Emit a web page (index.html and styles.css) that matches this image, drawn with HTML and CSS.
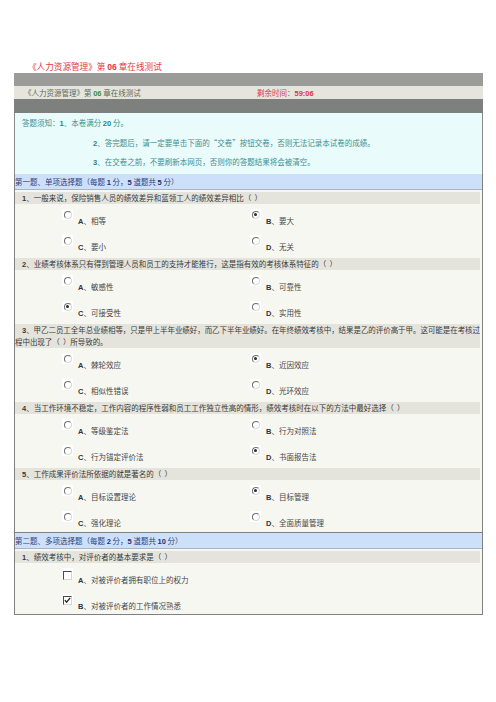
FILE: index.html
```html
<!DOCTYPE html>
<html lang="zh-CN">
<head>
<meta charset="utf-8">
<title>《人力资源管理》第06章在线测试</title>
<link rel="stylesheet" href="styles.css">
</head>
<body>
<div class="page">
  <h1 class="title">《人力资源管理》第 <span class="en">06</span> 章在线测试</h1>
  <div class="bar-top"></div>
  <div class="bar-info">
    <span class="exam">《人力资源管理》第 <span class="en green">06</span> 章在线测试</span>
    <span class="timer">剩余时间：<span class="en">59:06</span></span>
  </div>
  <div class="bar-dark"></div>
  <div class="notice">
    <div class="n1">答题须知：<span class="en">1</span>、本卷满分 <span class="en">20</span> 分。</div>
    <div class="n2"><span class="en">2</span>、答完题后，请一定要单击下面的“交卷”按钮交卷，否则无法记录本试卷的成绩。</div>
    <div class="n2"><span class="en">3</span>、在交卷之前，不要刷新本网页，否则你的答题结果将会被清空。</div>
  </div>

  <section class="sec">
    <div class="sec-head">第一题、单项选择题（每题 <span class="en">1</span> 分，<span class="en">5</span> 道题共 <span class="en">5</span> 分）</div>

    <div class="q">
      <div class="q-text"><span class="en">1</span>、一般来说，保险销售人员的绩效差异和蓝领工人的绩效差异相比（&nbsp;&nbsp;）</div>
      <div class="opts">
        <div class="opt"><span class="box"><span class="radio"></span></span><span class="opt-text"><span class="en">A</span>、相等</span></div>
        <div class="opt"><span class="box"><span class="radio on"></span></span><span class="opt-text"><span class="en">B</span>、要大</span></div>
        <div class="opt"><span class="box"><span class="radio"></span></span><span class="opt-text"><span class="en">C</span>、要小</span></div>
        <div class="opt"><span class="box"><span class="radio"></span></span><span class="opt-text"><span class="en">D</span>、无关</span></div>
      </div>
    </div>

    <div class="q">
      <div class="q-text"><span class="en">2</span>、业绩考核体系只有得到管理人员和员工的支持才能推行，这是指有效的考核体系特征的（&nbsp;&nbsp;）</div>
      <div class="opts">
        <div class="opt"><span class="box"><span class="radio"></span></span><span class="opt-text"><span class="en">A</span>、敏感性</span></div>
        <div class="opt"><span class="box"><span class="radio"></span></span><span class="opt-text"><span class="en">B</span>、可靠性</span></div>
        <div class="opt"><span class="box"><span class="radio on"></span></span><span class="opt-text"><span class="en">C</span>、可接受性</span></div>
        <div class="opt"><span class="box"><span class="radio"></span></span><span class="opt-text"><span class="en">D</span>、实用性</span></div>
      </div>
    </div>

    <div class="q">
      <div class="q-text two"><span class="en">3</span>、甲乙二员工全年总业绩相等，只是甲上半年业绩好，而乙下半年业绩好。在年终绩效考核中，结果是乙的评价高于甲。这可能是在考核过<br>程中出现了（&nbsp;&nbsp;）所导致的。</div>
      <div class="opts">
        <div class="opt"><span class="box"><span class="radio"></span></span><span class="opt-text"><span class="en">A</span>、棘轮效应</span></div>
        <div class="opt"><span class="box"><span class="radio on"></span></span><span class="opt-text"><span class="en">B</span>、近因效应</span></div>
        <div class="opt"><span class="box"><span class="radio"></span></span><span class="opt-text"><span class="en">C</span>、相似性错误</span></div>
        <div class="opt"><span class="box"><span class="radio"></span></span><span class="opt-text"><span class="en">D</span>、光环效应</span></div>
      </div>
    </div>

    <div class="q">
      <div class="q-text"><span class="en">4</span>、当工作环境不稳定，工作内容的程序性弱和员工工作独立性高的情形，绩效考核时在以下的方法中最好选择（&nbsp;&nbsp;）</div>
      <div class="opts">
        <div class="opt"><span class="box"><span class="radio"></span></span><span class="opt-text"><span class="en">A</span>、等级鉴定法</span></div>
        <div class="opt"><span class="box"><span class="radio"></span></span><span class="opt-text"><span class="en">B</span>、行为对照法</span></div>
        <div class="opt"><span class="box"><span class="radio"></span></span><span class="opt-text"><span class="en">C</span>、行为锚定评价法</span></div>
        <div class="opt"><span class="box"><span class="radio on"></span></span><span class="opt-text"><span class="en">D</span>、书面报告法</span></div>
      </div>
    </div>

    <div class="q">
      <div class="q-text"><span class="en">5</span>、工作成果评价法所依据的就是著名的（&nbsp;&nbsp;）</div>
      <div class="opts">
        <div class="opt"><span class="box"><span class="radio"></span></span><span class="opt-text"><span class="en">A</span>、目标设置理论</span></div>
        <div class="opt"><span class="box"><span class="radio on"></span></span><span class="opt-text"><span class="en">B</span>、目标管理</span></div>
        <div class="opt"><span class="box"><span class="radio"></span></span><span class="opt-text"><span class="en">C</span>、强化理论</span></div>
        <div class="opt"><span class="box"><span class="radio"></span></span><span class="opt-text"><span class="en">D</span>、全面质量管理</span></div>
      </div>
    </div>
  </section>

  <section class="sec">
    <div class="sec-head">第二题、多项选择题（每题 <span class="en">2</span> 分，<span class="en">5</span> 道题共 <span class="en">10</span> 分）</div>
    <div class="q">
      <div class="q-text"><span class="en">1</span>、绩效考核中，对评价者的基本要求是（&nbsp;&nbsp;）</div>
      <div class="opts single">
        <div class="opt"><span class="box"><span class="check"></span></span><span class="opt-text"><span class="en">A</span>、对被评价者拥有职位上的权力</span></div>
        <div class="opt"><span class="box"><span class="check"><svg class="tick" viewBox="0 0 8 8" width="7" height="7"><polyline points="1,3.5 3,6 7,1" fill="none" stroke="#2a2a2a" stroke-width="1.6"/></svg></span></span><span class="opt-text"><span class="en">B</span>、对被评价者的工作情况熟悉</span></div>
      </div>
    </div>
  </section>
</div>
</body>
</html>
```

FILE: styles.css
```css
* {
  box-sizing: border-box;
}

html, body {
  margin: 0;
  padding: 0;
  background: #ffffff;
}

body {
  font-family: "Noto Sans CJK SC", "Noto Sans", sans-serif;
  font-size: 7.5px;
  color: #444444;
}

.page {
  width: 469px;
  margin-left: 14px;
  padding-top: 59px;
}

.en {
  font-family: "Liberation Sans", "Noto Sans", sans-serif;
  font-weight: bold;
  line-height: 1;
}

.title {
  margin: 0;
  padding-left: 14px;
  height: 14px;
  line-height: 14px;
  font-size: 8.6px;
  font-weight: normal;
  color: #e23a48;
}

.bar-top {
  height: 13px;
  background: #9b9b99;
}

.bar-info {
  height: 13px;
  line-height: 13px;
  background: #e5e5dd;
  padding-left: 10px;
  display: flex;
}

.exam {
  width: 233px;
  color: #5f6a58;
}

.green {
  color: #3d8c3a;
}

.timer {
  color: #e2334a;
}

.bar-dark {
  height: 14px;
  background: #7e807e;
}

.notice {
  height: 61px;
  background: #e9fbfb;
  border-left: 1px solid #8a8a8a;
  border-right: 1px solid #8a8a8a;
  color: #3f9090;
  line-height: 19.5px;
}

.notice .en {
  color: #2f7f80;
}

.n1 {
  height: 19.5px;
  padding-left: 7px;
}

.n2 {
  height: 19.5px;
  padding-left: 78px;
}

.sec {
  background: #f7f7f2;
  border-left: 1px solid #808080;
  border-right: 1px solid #808080;
  border-bottom: 1px solid #808080;
}

.sec-head {
  height: 16px;
  line-height: 15px;
  background: #cde0fa;
  border-bottom: 1px solid #a9b4c4;
  color: #34407a;
  padding-left: 0;
}

.sec-head .en {
  color: #26306a;
}

.q-text {
  height: 12px;
  margin-top: 2px;
  margin-right: 2px;
  background: #e4e4dc;
  line-height: 12px;
  text-indent: 7px;
  color: #3a3a3a;
  white-space: nowrap;
}

.q-text.two {
  height: 24px;
  letter-spacing: -0.06px;
}

.opts {
  display: grid;
  grid-template-columns: 188px 1fr;
  grid-auto-rows: 26px;
  padding-left: 47px;
}

.opts.single {
  grid-template-columns: 1fr;
  grid-auto-rows: 25.5px;
}

.opt {
  display: flex;
  align-items: flex-start;
  padding-top: 5px;
}

.box {
  width: 11px;
  height: 11px;
  background: #ffffff;
  display: flex;
  align-items: center;
  justify-content: center;
  flex: none;
}

.radio {
  width: 8px;
  height: 8px;
  border-radius: 50%;
  border: 1px solid;
  border-color: #707070 #d8d8d8 #d8d8d8 #707070;
  background: #ffffff;
  display: flex;
  align-items: center;
  justify-content: center;
}

.radio.on::after {
  content: "";
  width: 3px;
  height: 3px;
  border-radius: 50%;
  background: #2a2a2a;
}

.check {
  width: 9px;
  height: 9px;
  border: 1.5px solid;
  border-color: #4a4a4a #d6d6d6 #d6d6d6 #4a4a4a;
  background: #ffffff;
  display: flex;
  align-items: center;
  justify-content: center;
  margin-top: 3px;
}

.tick {
  display: block;
}

.opt-text {
  margin-left: 5px;
  margin-top: 6px;
  line-height: 12px;
  height: 12px;
  color: #464646;
  white-space: nowrap;
}

.opt-text .en {
  color: #333333;
}
```
